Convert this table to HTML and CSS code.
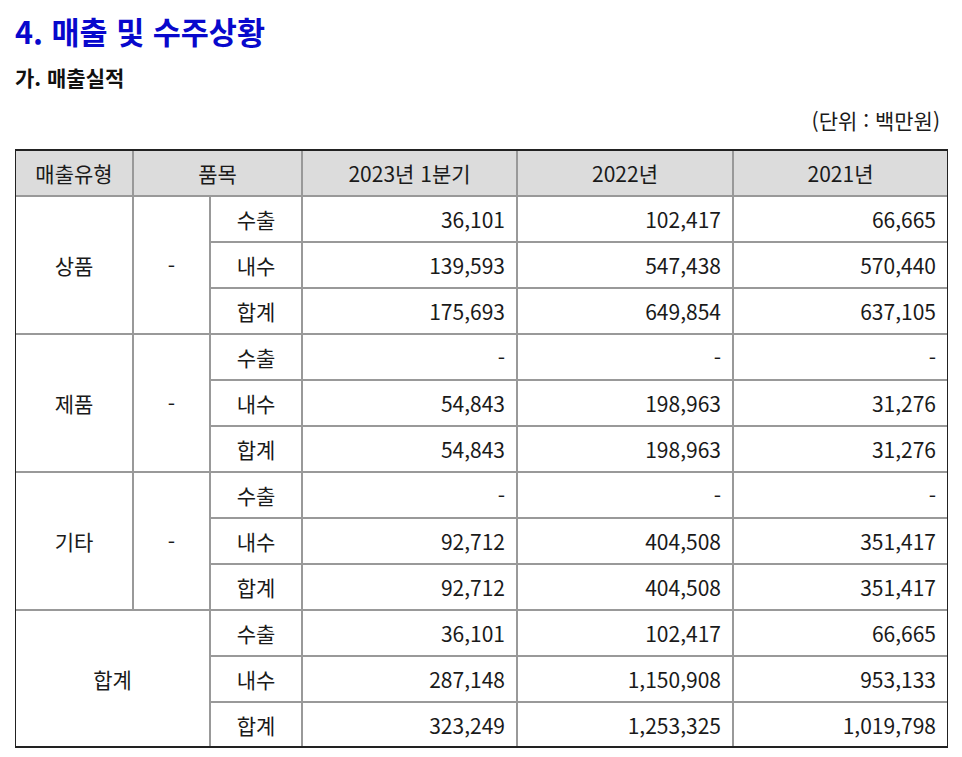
FILE: index.html
```html
<!DOCTYPE html>
<html lang="ko">
<head>
<meta charset="utf-8">
<link rel="stylesheet" href="styles.css">
</head>
<body>
<h1 class="title">4. 매출 및 수주상황</h1>
<h2 class="subtitle">가. 매출실적</h2>
<p class="unit">(단위 : 백만원)</p>
<table class="sales">
  <colgroup>
    <col class="c1"><col class="c2"><col class="c3"><col class="c4"><col class="c5"><col class="c6">
  </colgroup>
  <thead>
    <tr><th>매출유형</th><th colspan="2">품목</th><th>2023년 1분기</th><th>2022년</th><th>2021년</th></tr>
  </thead>
  <tbody>
    <tr><td rowspan="3" class="ctr">상품</td><td rowspan="3" class="ctr">-</td><td class="ctr">수출</td><td class="num">36,101</td><td class="num">102,417</td><td class="num">66,665</td></tr>
    <tr><td class="ctr">내수</td><td class="num">139,593</td><td class="num">547,438</td><td class="num">570,440</td></tr>
    <tr><td class="ctr">합계</td><td class="num">175,693</td><td class="num">649,854</td><td class="num">637,105</td></tr>
    <tr><td rowspan="3" class="ctr">제품</td><td rowspan="3" class="ctr">-</td><td class="ctr">수출</td><td class="num">-</td><td class="num">-</td><td class="num">-</td></tr>
    <tr><td class="ctr">내수</td><td class="num">54,843</td><td class="num">198,963</td><td class="num">31,276</td></tr>
    <tr><td class="ctr">합계</td><td class="num">54,843</td><td class="num">198,963</td><td class="num">31,276</td></tr>
    <tr><td rowspan="3" class="ctr">기타</td><td rowspan="3" class="ctr">-</td><td class="ctr">수출</td><td class="num">-</td><td class="num">-</td><td class="num">-</td></tr>
    <tr><td class="ctr">내수</td><td class="num">92,712</td><td class="num">404,508</td><td class="num">351,417</td></tr>
    <tr><td class="ctr">합계</td><td class="num">92,712</td><td class="num">404,508</td><td class="num">351,417</td></tr>
    <tr><td rowspan="3" colspan="2" class="ctr last">합계</td><td class="ctr">수출</td><td class="num">36,101</td><td class="num">102,417</td><td class="num">66,665</td></tr>
    <tr><td class="ctr">내수</td><td class="num">287,148</td><td class="num">1,150,908</td><td class="num">953,133</td></tr>
    <tr class="lastrow"><td class="ctr">합계</td><td class="num">323,249</td><td class="num">1,253,325</td><td class="num">1,019,798</td></tr>
  </tbody>
</table>
</body>
</html>
```
FILE: styles.css
```css
html, body {
  margin: 0;
  padding: 0;
  background: #fff;
}
body {
  padding: 12px 15px 0 15px;
  font-family: "Noto Sans CJK KR", "Noto Sans", sans-serif;
  color: #1a1a1a;
}
.title {
  margin: 0;
  font-size: 30.5px;
  line-height: 38px;
  font-weight: 700;
  color: #0808cc;
}
.subtitle {
  margin: 13px 0 0 0;
  font-size: 21px;
  line-height: 28px;
  font-weight: 700;
  color: #111;
}
.unit {
  margin: 15px 0 0 0;
  font-size: 21px;
  line-height: 28px;
  text-align: right;
  padding-right: 7px;
}
.sales {
  margin-top: 15px;
  width: 932px;
  table-layout: fixed;
  border-collapse: separate;
  border-spacing: 0;
  border-top: 2px solid #222;
  border-left: 1px solid #222;
  border-right: 1px solid #222;
  border-bottom: 2px solid #222;
  font-size: 21px;
}
.c1 { width: 118px; }
.c2 { width: 77px; }
.c3 { width: 92px; }
.c4 { width: 215px; }
.c5 { width: 216px; }
.c6 { width: 213px; }
.sales th, .sales td {
  height: 46px;
  padding: 0 11px;
  border-right: 2px solid #999;
  border-bottom: 2px solid #999;
  font-weight: 400;
  line-height: 28px;
  box-sizing: border-box;
}
.sales th {
  height: 46px;
  background: #dcdcdc;
  text-align: center;
}
.sales tr th:last-child,
.sales tr td:last-child {
  border-right: none;
}
.sales .lastrow td,
.sales td.last {
  border-bottom: none;
}
.sales .lastrow td {
  height: 43px;
}
.ctr { text-align: center; }
.num { text-align: right; }
```
